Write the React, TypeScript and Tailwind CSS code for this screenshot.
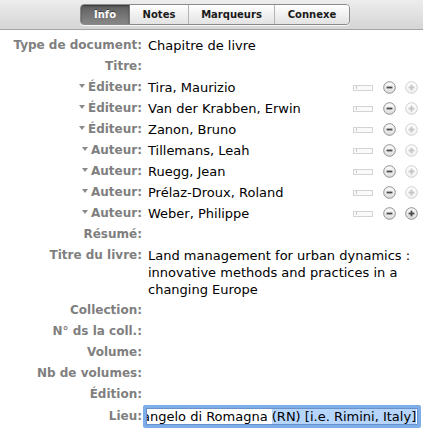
import * as React from "react";

type Field = {
  label: string;
  value?: string;
  creator?: boolean;
  last?: boolean;
};

const fields: Field[] = [
  { label: "Type de document", value: "Chapitre de livre" },
  { label: "Titre" },
  { label: "Éditeur", value: "Tira, Maurizio", creator: true },
  { label: "Éditeur", value: "Van der Krabben, Erwin", creator: true },
  { label: "Éditeur", value: "Zanon, Bruno", creator: true },
  { label: "Auteur", value: "Tillemans, Leah", creator: true },
  { label: "Auteur", value: "Ruegg, Jean", creator: true },
  { label: "Auteur", value: "Prélaz-Droux, Roland", creator: true },
  { label: "Auteur", value: "Weber, Philippe", creator: true, last: true },
  { label: "Résumé" },
  {
    label: "Titre du livre",
    value:
      "Land management for urban dynamics : innovative methods and practices in a changing Europe",
  },
  { label: "Collection" },
  { label: "N° ds la coll." },
  { label: "Volume" },
  { label: "Nb de volumes" },
  { label: "Édition" },
];

const tabs = [
  { name: "Info", w: "w-[48px]" },
  { name: "Notes", w: "w-[59px]" },
  { name: "Marqueurs", w: "w-[86px]" },
  { name: "Connexe", w: "w-[75px]" },
];

function Disclosure() {
  return (
    <svg width="6" height="4" viewBox="0 0 6 4" className="inline-block mr-[3px] mb-[3px]">
      <path d="M0 0h6L3 4z" fill="#8a8a8a" />
    </svg>
  );
}

function CircleButton({ kind, active }: { kind: "minus" | "plus"; active: boolean }) {
  const stroke = active ? "#8f8f8f" : "#cfcfcf";
  const ink = active ? "#4a4a4a" : "#c4c4c4";
  const id = `g-${kind}-${active ? "a" : "d"}`;
  return (
    <svg width="13" height="13" viewBox="0 0 13 13" className="block">
      <defs>
        <linearGradient id={id} x1="0" y1="0" x2="0" y2="1">
          <stop offset="0" stopColor={active ? "#fdfdfd" : "#ffffff"} />
          <stop offset="1" stopColor={active ? "#dcdcdc" : "#f0f0f0"} />
        </linearGradient>
      </defs>
      <circle cx="6.5" cy="6.5" r="5.8" fill={`url(#${id})`} stroke={stroke} strokeWidth="1" />
      <path d="M3.6 6.5h5.8" stroke={ink} strokeWidth="1.8" />
      {kind === "plus" && <path d="M6.5 3.6v5.8" stroke={ink} strokeWidth="1.8" />}
    </svg>
  );
}

function CreatorControls({ last }: { last?: boolean }) {
  return (
    <div className="flex items-center h-[17px] shrink-0 pr-[5px]">
      <div className="w-[20px] h-[6px] border border-[#d4d4d4] bg-[#fafafa] flex items-center pl-[2px]">
        <div className="w-px h-[3px] bg-[#c8c8c8]" />
      </div>
      <div className="ml-[10px]">
        <CircleButton kind="minus" active />
      </div>
      <div className="ml-[9px]">
        <CircleButton kind="plus" active={!!last} />
      </div>
    </div>
  );
}

function Row({ field }: { field: Field }) {
  return (
    <div className="flex items-start py-[2px] leading-[17px]">
      <div className="w-[142px] shrink-0 text-right text-[12px] font-bold text-[#7f7f7f] whitespace-nowrap">
        {field.creator && <Disclosure />}
        {field.label}:
      </div>
      <div className="flex-1 pl-[6px] pr-[3px] text-[13px] text-black">{field.value}</div>
      {field.creator && <CreatorControls last={field.last} />}
    </div>
  );
}

export default function App() {
  return (
    <div className="w-[423px] h-[430px] overflow-hidden bg-white font-['DejaVu_Sans',sans-serif]">
      <div className="h-[30px] bg-linear-to-b from-[#ededed] to-[#d5d5d5] border-b border-[#a3a3a3] pl-[80px] pt-[4px]">
        <div className="flex h-[21px] rounded-[4px] border border-[#8b8b8b] overflow-hidden w-fit shadow-[0_1px_0_rgba(255,255,255,0.8)]">
          {tabs.map((t, i) => (
            <div
              key={t.name}
              className={
                i === 0
                  ? `${t.w} flex items-center justify-center text-[10px] font-bold text-white bg-linear-to-b from-[#5e5e5e] to-[#888888] shadow-[inset_0_1px_2px_rgba(0,0,0,0.45)] [text-shadow:0_-1px_0_rgba(0,0,0,0.5)]`
                  : `${t.w} flex items-center justify-center text-[10px] font-bold text-[#1a1a1a] bg-linear-to-b from-white to-[#e2e2e2] ${i > 1 ? "border-l border-[#b4b4b4]" : "border-l border-[#7a7a7a]"}`
              }
            >
              {t.name}
            </div>
          ))}
        </div>
      </div>

      <div className="pt-[5px]">
        {fields.map((f, i) => (
          <Row key={i} field={f} />
        ))}

        <div className="flex items-center">
          <div className="w-[142px] shrink-0 text-right text-[12px] font-bold text-[#7f7f7f] leading-[17px]">
            Lieu:
          </div>
          <div className="ml-[1px] w-[278px] h-[23px] rounded-[2px] bg-[#7eaee9] p-[3px]">
            <div className="h-full bg-white border border-[#6a93cc] overflow-hidden flex items-center">
              <span className="-ml-[5px] whitespace-nowrap text-[13px] leading-[14px] text-black">
                angelo di Romagna <span className="bg-[#b5d5fd]">(RN) [i.e. Rimini, Italy]</span>
              </span>
            </div>
          </div>
        </div>

        <Row field={{ label: "Éditeur" }} />
      </div>
    </div>
  );
}
